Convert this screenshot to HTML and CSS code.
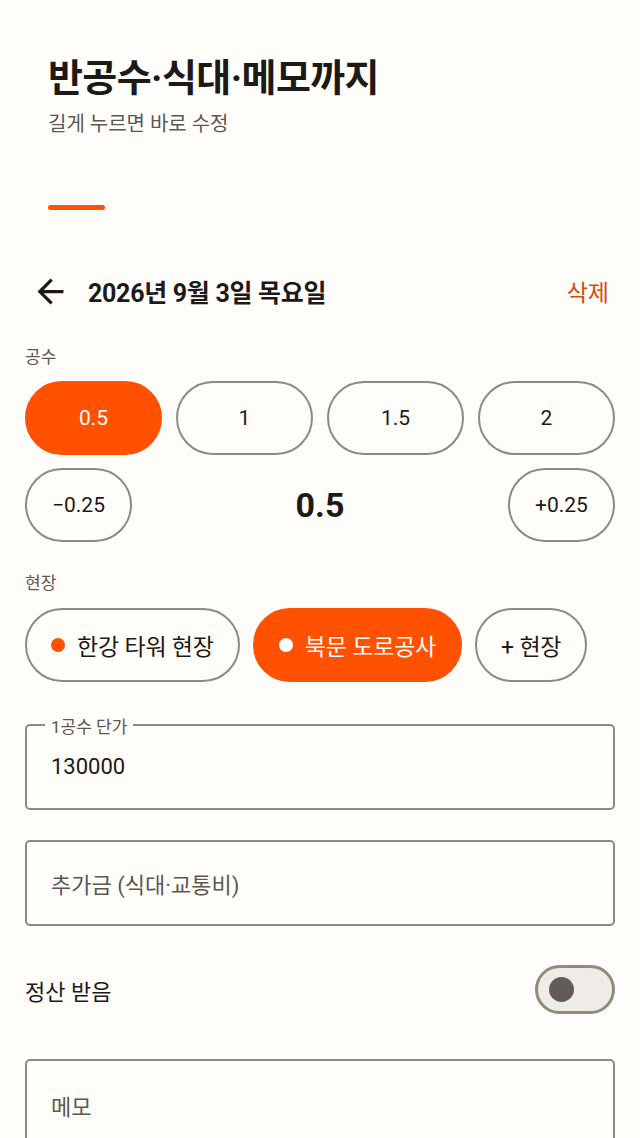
FILE: index.html
```html
<!DOCTYPE html>
<html lang="ko">
<head>
    <meta charset="UTF-8">
    <meta name="viewport" content="width=device-width, initial-scale=1.0">
    <title>공수 편집</title>
    <link rel="stylesheet" href="styles.css">
</head>
<body>
    <div class="intro">
        <h1 class="intro-title">반공수·식대·메모까지</h1>
        <p class="intro-sub">길게 누르면 바로 수정</p>
        <div class="intro-bar"></div>
    </div>

    <div class="sheet">
        <div class="top-row">
            <div class="back">
                <svg width="39" height="39" viewBox="0 0 24 24"><path d="M20 11H7.83l5.59-5.59L12 4l-8 8 8 8 1.41-1.41L7.83 13H20v-2z" fill="#1c1917"/></svg>
            </div>
            <div class="date">2026년 9월 3일 목요일</div>
            <div class="delete">삭제</div>
        </div>

        <div class="label">공수</div>
        <div class="chips-4">
            <div class="pill on">0.5</div>
            <div class="pill">1</div>
            <div class="pill">1.5</div>
            <div class="pill">2</div>
        </div>
        <div class="stepper">
            <div class="pill step">−0.25</div>
            <div class="value">0.5</div>
            <div class="pill step">+0.25</div>
        </div>

        <div class="label">현장</div>
        <div class="sites">
            <div class="pill site"><span class="dot"></span>한강 타워 현장</div>
            <div class="pill site on"><span class="dot"></span>북문 도로공사</div>
            <div class="pill site add">+ 현장</div>
        </div>

        <div class="field filled">
            <span class="field-label">1공수 단가</span>
            <span class="field-value">130000</span>
        </div>
        <div class="field">
            <span class="field-hint">추가금 (식대·교통비)</span>
        </div>

        <div class="switch-row">
            <span>정산 받음</span>
            <div class="switch"><div class="knob"></div></div>
        </div>

        <div class="field memo">
            <span class="field-hint">메모</span>
        </div>
    </div>
</body>
</html>
```

FILE: styles.css
```css
*{
    margin: 0;
    padding: 0;
    box-sizing: border-box;
}
body{
    background-color: #fffdfa;
    font-family: Roboto, "Noto Sans CJK KR", sans-serif;
    color: #1c1917;
    height: 1138px;
    overflow: hidden;
}
.intro{
    padding: 54px 48px 0;
}
.intro-title{
    font-size: 38px;
    font-weight: 700;
    line-height: 48px;
    letter-spacing: -0.6px;
}
.intro-sub{
    margin-top: 9px;
    font-size: 20px;
    line-height: 26px;
    color: #5c5752;
}
.intro-bar{
    margin-top: 68px;
    width: 57px;
    height: 5px;
    border-radius: 3px;
    background-color: #ff5100;
}
.sheet{
    padding: 0 25px;
}
.top-row{
    display: flex;
    align-items: center;
    height: 50px;
    margin-top: 56px;
}
.back{
    width: 63px;
    padding-left: 6px;
    display: flex;
}
.date{
    flex: 1;
    font-size: 25px;
    font-weight: 700;
    letter-spacing: -0.3px;
}
.delete{
    font-size: 23px;
    color: #d9480f;
    padding-right: 6px;
}
.label{
    margin-top: 30px;
    font-size: 17px;
    line-height: 22px;
    color: #5c5752;
}
.pill{
    height: 74px;
    border: 2px solid #8c8a82;
    border-radius: 37px;
    display: flex;
    align-items: center;
    justify-content: center;
    font-size: 21px;
    color: #1c1917;
}
.pill.on{
    background-color: #ff5100;
    border-color: #ff5100;
    color: #fff;
}
.chips-4{
    display: grid;
    grid-template-columns: repeat(4, 1fr);
    gap: 14px;
    margin-top: 13px;
}
.stepper{
    display: flex;
    align-items: center;
    margin-top: 13px;
}
.step{
    width: 107px;
}
.value{
    flex: 1;
    text-align: center;
    font-size: 34px;
    font-weight: 700;
}
.sites{
    display: flex;
    gap: 13px;
    margin-top: 14px;
}
.site{
    font-size: 23px;
    padding: 0 24px;
    letter-spacing: -0.2px;
}
.dot{
    width: 14px;
    height: 14px;
    border-radius: 50%;
    background-color: #ff5100;
    margin-right: 12px;
}
.site.on .dot{
    background-color: #fff;
}
.field{
    position: relative;
    height: 86px;
    border: 2px solid #8c8a82;
    border-radius: 5px;
    margin-top: 30px;
    display: flex;
    align-items: center;
    padding: 0 24px;
    font-size: 22px;
}
.field.filled{
    margin-top: 42px;
}
.field-label{
    position: absolute;
    left: 18px;
    top: -13px;
    padding: 0 6px;
    font-size: 17px;
    color: #5c5752;
    background-color: #fffdfa;
}
.field-value{
    margin-top: -2px;
}
.field-hint{
    color: #5c5752;
}
.switch-row{
    display: flex;
    align-items: center;
    justify-content: space-between;
    margin-top: 39px;
    font-size: 22px;
}
.switch{
    width: 80px;
    height: 49px;
    border: 3px solid #8c8a82;
    border-radius: 25px;
    background-color: #efebe7;
    display: flex;
    align-items: center;
    padding-left: 11px;
}
.knob{
    width: 25px;
    height: 25px;
    border-radius: 50%;
    background-color: #625b57;
}
.memo{
    margin-top: 45px;
    height: 120px;
    align-items: flex-start;
    padding-top: 28px;
}
```
